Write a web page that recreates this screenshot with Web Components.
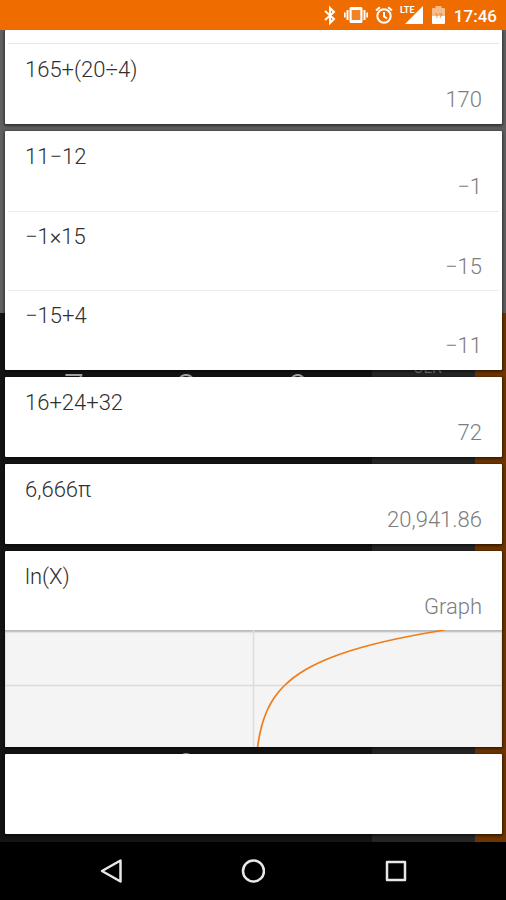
<!DOCTYPE html>
<html lang="en">
<head>
<meta charset="utf-8">
<meta name="viewport" content="width=device-width, initial-scale=1">
<title>Calculator history</title>
<style>
  html, body { margin: 0; height: 100%; background: #000; }
  body { font-family: Roboto, "Noto Sans", sans-serif; }
</style>
</head>
<body>
<calc-screen>
  <status-bar slot="status" time="17:46"></status-bar>
  <calc-keypad slot="backdrop"></calc-keypad>
  <history-card peek style="--base:14px">
    <history-entry result="170">165+(20÷4)</history-entry>
  </history-card>
  <history-card style="--share:3">
    <history-entry result="−1">11−12</history-entry>
    <history-entry result="−15" divided>−1×15</history-entry>
    <history-entry result="−11" divided>−15+4</history-entry>
  </history-card>
  <history-card><history-entry result="72">16+24+32</history-entry></history-card>
  <history-card><history-entry result="20,941.86">6,666π</history-entry></history-card>
  <history-card style="--base:117px">
    <history-entry result="Graph">ln(X)</history-entry>
    <log-graph></log-graph>
  </history-card>
  <history-card></history-card>
  <nav-bar slot="nav"></nav-bar>
</calc-screen>

<script>
const define = (name, html, setup) => customElements.define(name, class extends HTMLElement {
  connectedCallback() {
    if (this.shadowRoot) return;
    this.attachShadow({ mode: 'open' }).innerHTML = html;
    if (setup) setup(this, this.shadowRoot);
  }
});

define('calc-screen', `
<style>
  :host { display: flex; flex-direction: column; min-height: 100vh; }
  .stage { flex: 1; display: grid; grid-template: minmax(0, 1fr) / minmax(0, 1fr); overflow: hidden; }
  .stage > * { grid-area: 1 / 1; }
  ::slotted([slot=backdrop]) { grid-area: 1 / 1; }
  main { display: flex; flex-direction: column; gap: 7px; padding: 0 4px 8px 5px; z-index: 1; }
</style>
<slot name="status"></slot>
<div class="stage"><slot name="backdrop"></slot><main><slot></slot></main></div>
<slot name="nav"></slot>`);

define('status-bar', `
<style>
  :host { display: flex; align-items: center; justify-content: flex-end; height: 30px; padding-right: 9px; background: #ef6c00; color: #fff; }
  svg { display: block; fill: currentColor; overflow: visible; }
  .bt { margin-right: 8px; } .vib, .alarm { margin-right: 7px; } .sig, .bat { margin-right: 9px; }
  text { font: 700 8px Roboto, sans-serif; }
  time { font-size: 17px; font-weight: 500; line-height: 24px; padding-top: 2px; }
</style>
<svg class="bt" width="12" height="18" viewBox="0 0 12 18" style="fill:none;stroke:#fff;stroke-width:2"><path d="M1 5 10 13 6 17V2L10 6 1 14"/></svg>
<svg class="vib" width="24" height="18" viewBox="0 0 24 18"><path fill-rule="evenodd" d="M7 1h10q1.500 0 1.500 1.500v13q0 1.500-1.500 1.500H7q-1.500 0-1.500-1.500v-13Q5.500 1 7 1Zm.7 3v10h8.600V4Z"/><path opacity=".15" d="M7.700 4h8.600v10H7.700z"/><path d="M2.500 4h2v10h-2zM19.500 4h2v10h-2zM0 6.500h1.700v5H0zM22.300 6.500H24v5h-1.700z"/></svg>
<svg class="alarm" width="18" height="18" viewBox="0 0 18 18" style="fill:none;stroke:#fff;stroke-width:2"><circle cx="9" cy="10" r="6.700"/><path d="M9 6v4.500l3 2M1 4.500 4.800 1.300M17 4.500 13.200 1.300"/></svg>
<svg class="sig" width="23" height="20" viewBox="0 0 23 20"><path d="M23 1v18H5L15 9Z"/><text x="0" y="8" style="font-size:9px">LTE</text></svg>
<svg class="bat" width="13" height="18" viewBox="0 0 13 18"><path opacity=".55" d="M3.500 0h6v2H12q1 0 1 1v7H0V3q0-1 1-1h2.500Z"/><path d="M0 10h13v7q0 1-1 1H1q-1 0-1-1Z"/><path d="M3 8h2v4M7 8h3L8 12" fill="none" stroke="#ef6c00" opacity=".7"/></svg>
<time></time>`, (el, root) => { root.querySelector('time').textContent = el.getAttribute('time'); });

define('calc-keypad', `
<style>
  :host { display: grid; grid-template-rows: 283fr 529fr; background: #616161; min-height: 0; }
  .pad { grid-row: 2; display: grid; grid-template-columns: 372fr 103fr 31fr; background: #141414; color: #aaa; min-height: 0; }
  .digits { display: grid; grid-template: repeat(4, 1fr) / repeat(3, 1fr); padding: 12px 18px; place-items: center; font-size: 36px; line-height: 40px; font-weight: 300; }
  .zero { grid-area: 4 / 2; }
  .ops { display: grid; grid-template-rows: repeat(5, 1fr); justify-items: center; align-items: center; background: #262626; font-size: 16px; line-height: 20px; color: #777; padding: 2px 0 0 8px; }
  .more { background: #6f3500; }
</style>
<div class="pad">
  <div class="digits"><span>7</span><span>8</span><span>9</span><span class="zero">0</span></div>
  <div class="ops"><span>CLR</span></div>
  <div class="more"></div>
</div>`);

define('history-card', `
<style>
  :host { flex: var(--share, 1) 0 var(--base, 0px); display: flex; flex-direction: column; background: #fff; border-radius: 1px; box-shadow: 0 1px 3px 1px rgba(0,0,0,.5); }
  :host([peek])::before { content: ""; flex: none; height: 13px; border-bottom: 1px solid #e4e8e8; margin: 0 3px; }
</style>
<slot></slot>`);

define('history-entry', `
<style>
  :host { flex: 1 0 0px; box-sizing: border-box; display: flex; flex-direction: column; padding: 11px 20px 0; font-size: 22px; line-height: 30px; font-weight: 300; }
  :host([divided]) { background: linear-gradient(#ebebeb, #ebebeb) center top / calc(100% - 6px) 1px no-repeat; }
  .expr { color: #303030; }
  .result { color: #7d7d7d; text-align: right; }
</style>
<div class="expr"><slot></slot></div>
<div class="result"></div>`, (el, root) => { root.querySelector('.result').textContent = el.getAttribute('result'); });

define('log-graph', `
<style>
  :host { flex: none; display: block; height: 117px; background: #f4f4f4; box-shadow: inset 0 2px 2px rgba(0,0,0,.25); }
  svg { display: block; width: 100%; height: 100%; fill: none; }
</style>
<svg viewBox="0 0 497 117" preserveAspectRatio="none" role="img" aria-label="Graph of ln(X)">
  <path d="M0 55.500H497M248.500 0V117" stroke="#dcdcdc" stroke-width="1.500"/>
  <path class="curve" stroke="#ef7d1a" stroke-width="1.700"/>
</svg>`, (el, root) => {
  const points = [];
  for (let y = 117; y >= 0; y -= 3) {
    const x = 248.5 + 31 * Math.exp((55.5 - y) / 30.5);
    points.push(x.toFixed(2) + ' ' + y);
  }
  root.querySelector('.curve').setAttribute('d', 'M' + points.join('L'));
});

define('nav-bar', `
<style>
  :host { display: grid; grid-template-columns: repeat(3, 142px); justify-content: center; height: 58px; background: #000; }
  button { border: 0; padding: 0; background: none; display: grid; place-items: center; }
  svg { fill: none; stroke: #e8e8e8; stroke-width: 2.500; stroke-linejoin: round; }
</style>
<button aria-label="Back"><svg width="24" height="24" viewBox="0 0 24 24"><path d="M21.500 1.500v21L3 12Z"/></svg></button>
<button aria-label="Home"><svg width="24" height="24" viewBox="0 0 24 24"><circle cx="12.500" cy="12" r="10.500"/></svg></button>
<button aria-label="Recent apps"><svg width="24" height="24" viewBox="0 0 24 24"><path d="M4 3h18v18H4z"/></svg></button>`);
</script>
</body>
</html>
